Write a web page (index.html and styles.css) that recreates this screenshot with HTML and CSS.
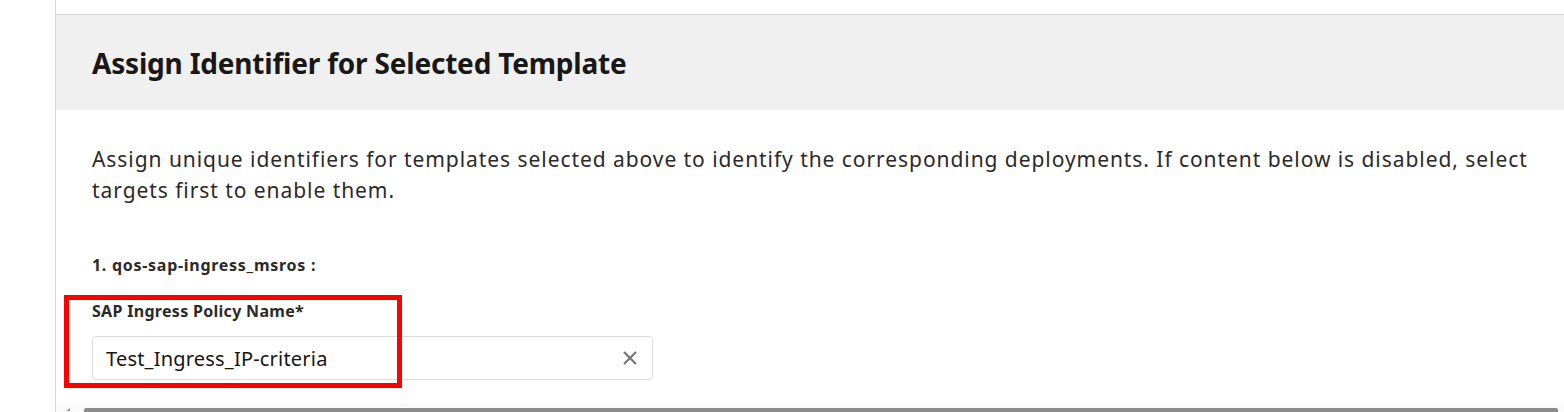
FILE: index.html
```html
<!DOCTYPE html>
<html lang="en">
<head>
    <meta charset="UTF-8">
    <meta name="viewport" content="width=device-width, initial-scale=1.0">
    <title>Assign Identifier</title>
    <link rel="stylesheet" href="styles.css">
</head>
<body>
    <div class="sidebar"></div>
    <div class="main">
        <div class="panel">
            <div class="panel-header">
                <h2>Assign Identifier for Selected Template</h2>
            </div>
            <div class="panel-body">
                <p class="desc">Assign unique identifiers for templates selected above to identify the corresponding deployments. If content below is disabled, select targets first to enable them.</p>

                <div class="template-title">1. qos-sap-ingress_msros :</div>

                <div class="field">
                    <div class="highlight"></div>
                    <label class="field-label" for="policyName">SAP Ingress Policy Name*</label>
                    <div class="input-wrap">
                        <input id="policyName" class="text-input" type="text" value="Test_Ingress_IP-criteria">
                        <span class="clear-btn">
                            <svg width="16" height="16" viewBox="0 0 16 16">
                                <path d="M2 2 L14 14 M14 2 L2 14" stroke="#757575" stroke-width="2.2" fill="none"/>
                            </svg>
                        </span>
                    </div>
                </div>
            </div>
        </div>

        <div class="hscroll">
            <span class="arrow"></span>
            <div class="thumb"></div>
        </div>
    </div>
</body>
</html>
```

FILE: styles.css
```css
html, body {
    margin: 0;
    height: 412px;
    overflow: hidden;
}
body {
    display: flex;
    font-family: 'Noto Sans', 'Open Sans', sans-serif;
    color: #161513;
    background: #fff;
}
.sidebar {
    width: 55px;
    flex: none;
}
.main {
    flex: 1;
    display: flex;
    flex-direction: column;
    border-left: 1px solid #d9d9d9;
    padding-top: 14px;
}
.panel {
    border-top: 1px solid #d6d6d6;
}
.panel-header {
    height: 95px;
    background: #f0f0f0;
    display: flex;
    align-items: center;
    padding-left: 36px;
}
.panel-header h2 {
    margin: 0;
    font-size: 28px;
    font-weight: bold;
    color: #1a1816;
    letter-spacing: -0.2px;
}
.panel-body {
    padding: 0 36px;
}
.desc {
    margin: 34px 0 0;
    font-size: 21px;
    line-height: 31px;
    letter-spacing: 0.94px;
    color: #2b2a28;
}
.template-title {
    margin-top: 49px;
    font-size: 16px;
    line-height: 20px;
    font-weight: bold;
    letter-spacing: 0.72px;
    color: #2b2a28;
}
.field {
    position: relative;
    margin-top: 26px;
}
.highlight {
    position: absolute;
    left: -28px;
    top: -6px;
    width: 328px;
    height: 83px;
    border: 5px solid #ff0000;
}
.field-label {
    display: block;
    font-size: 16px;
    line-height: 20px;
    font-weight: bold;
    letter-spacing: 0.3px;
    color: #2b2a28;
}
.input-wrap {
    margin-top: 15px;
    width: 559px;
    height: 42px;
    border: 1px solid #dcdcdc;
    border-radius: 4px;
    display: flex;
    align-items: center;
    background: #fff;
}
.text-input {
    flex: 1;
    border: none;
    outline: none;
    background: transparent;
    padding: 0 0 0 13px;
    font-family: inherit;
    font-size: 20px;
    letter-spacing: 0.2px;
    color: #161513;
}
.clear-btn {
    display: flex;
    margin-right: 14px;
}
.hscroll {
    margin-top: auto;
    height: 9px;
    background: #fafafa;
    display: flex;
    align-items: flex-end;
    padding-left: 10px;
}
.arrow {
    width: 0;
    height: 0;
    border-top: 3px solid transparent;
    border-right: 4px solid #999;
    margin-bottom: 1px;
}
.thumb {
    flex: 1;
    height: 4px;
    margin-left: 14px;
    margin-right: 6px;
    background: #8a8a8a;
    border-radius: 2px 2px 0 0;
}
```
